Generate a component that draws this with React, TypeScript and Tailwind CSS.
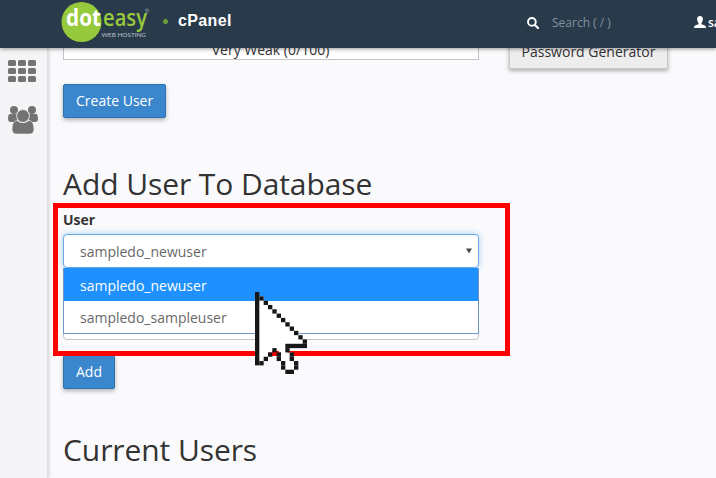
import type { ReactNode } from "react";

// Each run: [row, first column, length]
const DARK: number[][] = [
  [1, 1, 1], [2, 2, 1], [3, 3, 1], [4, 4, 1], [5, 5, 1], [6, 6, 1], [7, 7, 1],
  [8, 8, 1], [9, 9, 1], [10, 10, 1], [11, 11, 1], [12, 7, 5], [13, 4, 1], [13, 7, 1],
  [14, 3, 1], [14, 5, 1], [14, 8, 1], [15, 2, 1], [15, 5, 1], [15, 8, 1],
  [16, 1, 1], [16, 6, 1], [16, 9, 1], [17, 6, 1], [17, 9, 1], [18, 7, 2],
];

function Cursor() {
  return (
    <svg className="absolute left-[255px] top-[292px] z-40 h-[82px] w-[52px]" viewBox="0 0 12 19" preserveAspectRatio="none">
      <path fill="#fff" d="M.5 1H2V2H3V3H4V4H5V5H6V6H7V7H8V8H9V9H10V10H11V12.5H7.5V14H8.5V16H9.5V18.5H7V16H6V14H5.5V13.5H4V14H3V15H2V16H.5Z" />
      <rect width="1" height="17" fill="#151719" />
      {DARK.map(([row, col, len]) => (
        <rect key={`${row}-${col}`} x={col} y={row} width={len} height="1" fill="#151719" />
      ))}
    </svg>
  );
}

function Logo() {
  return (
    <svg className="ml-[61px] h-[48px] w-[90px] shrink-0" viewBox="61 0 90 48">
      <circle cx="81.500" cy="22" r="20" fill="#97c93d" />
      <text x="66" y="26" fontSize="23" fontWeight="700" fill="#fff" fontFamily="Open Sans, sans-serif" textLength="35" lengthAdjust="spacingAndGlyphs">dot</text>
      <text x="103" y="26" fontSize="24" fontWeight="600" fill="#97c93d" fontFamily="Open Sans, sans-serif" textLength="44" lengthAdjust="spacingAndGlyphs">easy</text>
      <text x="144.500" y="13" fontSize="6" fill="#91a0aa" fontFamily="Open Sans, sans-serif">®</text>
      <text x="101.500" y="37" fontSize="6" fontWeight="600" fill="#a9b3bb" fontFamily="Lato, sans-serif" textLength="44.500" lengthAdjust="spacingAndGlyphs">WEB HOSTING</text>
    </svg>
  );
}

function Header() {
  return (
    <header className="relative z-20 flex h-12 w-full shrink-0 items-center overflow-hidden bg-[#293a4a] shadow-[0_1px_4px_rgba(0,0,0,0.4)]">
      <Logo />
      <span className="mb-[6px] ml-3 h-[5px] w-[5px] shrink-0 rounded-full bg-[#6f9d3c]" />
      <span className="ml-[10px] w-[54px] shrink-0 pb-[7px] font-['Liberation_Sans',sans-serif] text-[16px] leading-5 font-bold tracking-[0.35px] text-white">cPanel</span>
      <svg className="mb-[2px] ml-[295px] h-3 w-3 shrink-0" viewBox="0 0 12 12" fill="none" stroke="#fff">
        <circle cx="4.900" cy="4.900" r="3.900" strokeWidth="1.900" />
        <path d="M7.700 7.700 11 11" strokeWidth="2.200" strokeLinecap="round" />
      </svg>
      <span className="ml-[13px] w-[142px] shrink-0 pb-[2px] text-[12px] text-[#8490a0]">Search ( / )</span>
      <svg className="mb-1 h-3 w-3 shrink-0" viewBox="0 0 12 12" fill="#fff">
        <path d="M6 0C3.900 0 3 1.400 3.100 3.300 3.200 5.100 3.900 6.200 4.500 6.900V8.200L1 9.600Q0 10 0 12H12Q12 10 11 9.600L7.500 8.200V6.900C8.100 6.200 8.800 5.100 8.900 3.300 9 1.400 8.100 0 6 0Z" />
      </svg>
      <span className="ml-[2px] shrink-0 pb-[2px] text-[12px] font-semibold text-white">sampledo</span>
    </header>
  );
}

function Sidebar() {
  return (
    <aside className="flex w-12 shrink-0 flex-col border-r border-[#dedee2] bg-[#f5f4f6] pl-2 shadow-[1px_0_3px_rgba(0,0,0,0.16)]">
      <div className="mt-3 grid w-7 grid-cols-3 gap-x-[2px] gap-y-[2px]">
        {[0, 1, 2, 3, 4, 5, 6, 7, 8].map((n) => (
          <span key={n} className="h-[6px] rounded-[1.5px] bg-[#737373]" />
        ))}
      </div>
      <svg className="mt-6 h-[28px] w-[30px]" viewBox="0 0 30 28" fill="#737373">
        <circle cx="6" cy="4" r="4" />
        <circle cx="24" cy="4" r="4" />
        <path d="M2 8Q0 8 0 13 0 16 3 16H9V8ZM28 8Q30 8 30 13 30 16 27 16H21V8Z" />
        <path d="M9 14.500Q4 15 4 23 4 28 8.500 28H21.500Q26 28 26 23 26 15 21 14.500Q15 19 9 14.500Z" stroke="#f5f4f6" strokeWidth=".6" />
        <circle cx="15" cy="10" r="6.400" stroke="#f5f4f6" strokeWidth=".8" />
      </svg>
    </aside>
  );
}

function PrimaryButton({ children }: { children: ReactNode }) {
  return (
    <button className="h-[34px] rounded-[2px] border border-[#2a73b0] bg-[#3a87cd] px-3 text-[14px] leading-5 text-white shadow-[0_2px_4px_rgba(0,0,0,0.3)]">
      {children}
    </button>
  );
}

export default function App() {
  return (
    <div className="relative flex h-[478px] w-[716px] flex-col overflow-hidden bg-[#fafafc] font-['Open_Sans',sans-serif] text-[#333]">
      <Header />
      <div className="flex min-h-0 flex-1">
        <Sidebar />
        <main className="-mt-[22px] flex min-w-0 flex-1 flex-col items-start pl-[15px]">
          <div className="flex h-[43px] shrink-0 items-start">
            <div className="h-[34px] w-[416px] border border-[#c4c4ca] bg-white pt-[13px] pr-px text-center text-[14px] leading-5">Very Weak (0/100)</div>
            <button className="ml-[30px] flex h-[43px] w-[159px] items-start justify-center border border-[#c8c8c8] bg-[#ededee] pt-[15px] text-[14px] leading-5 shadow-[0_2px_4px_rgba(0,0,0,0.3)]">Password Generator</button>
          </div>
          <div className="mt-[15px] flex h-[34px] shrink-0"><PrimaryButton>Create User</PrimaryButton></div>
          <h2 className="mt-[48px] h-9 shrink-0 text-[30px] leading-9 tracking-[-0.08px]">Add User To Database</h2>
          <label className="mt-2 h-5 shrink-0 text-[14px] leading-5 font-bold">User</label>
          <div className="relative mt-1 h-[34px] w-[416px] shrink-0">
            <div className="flex h-full items-center justify-between rounded-[4px] border border-[#66a7e4] bg-white pr-[6px] pl-4 text-[14px] text-[#686868] shadow-[0_0_6px_rgba(82,168,236,0.5)]">
              <span>sampledo_newuser</span>
              <svg className="mb-px h-[6px] w-[6px]" viewBox="0 0 7 6"><path d="M0 0H7L3.500 6Z" fill="#484848" /></svg>
            </div>
            <ul className="absolute top-[34px] left-0 z-10 w-full border border-t-0 border-[#6f95c6] bg-white text-[14px] leading-5">
              <li className="h-[33px] bg-[#1e90ff] pt-[8px] pl-4 text-white">sampledo_newuser</li>
              <li className="h-[32px] pt-[7px] pl-4 text-[#686868]">sampledo_sampleuser</li>
            </ul>
          </div>
          <div className="mt-[38px] h-[34px] w-[416px] shrink-0 rounded-[4px] border border-[#c4c4ca] bg-white" />
          <div className="mt-[15px] flex h-[34px] shrink-0"><PrimaryButton>Add</PrimaryButton></div>
          <h2 className="mt-[43px] h-9 shrink-0 text-[30px] leading-9 tracking-[-0.08px]">Current Users</h2>
        </main>
      </div>
      <div className="pointer-events-none absolute top-[203px] left-[53px] z-30 h-[153px] w-[457px] border-[5px] border-[#fe0000]" />
      <Cursor />
    </div>
  );
}
